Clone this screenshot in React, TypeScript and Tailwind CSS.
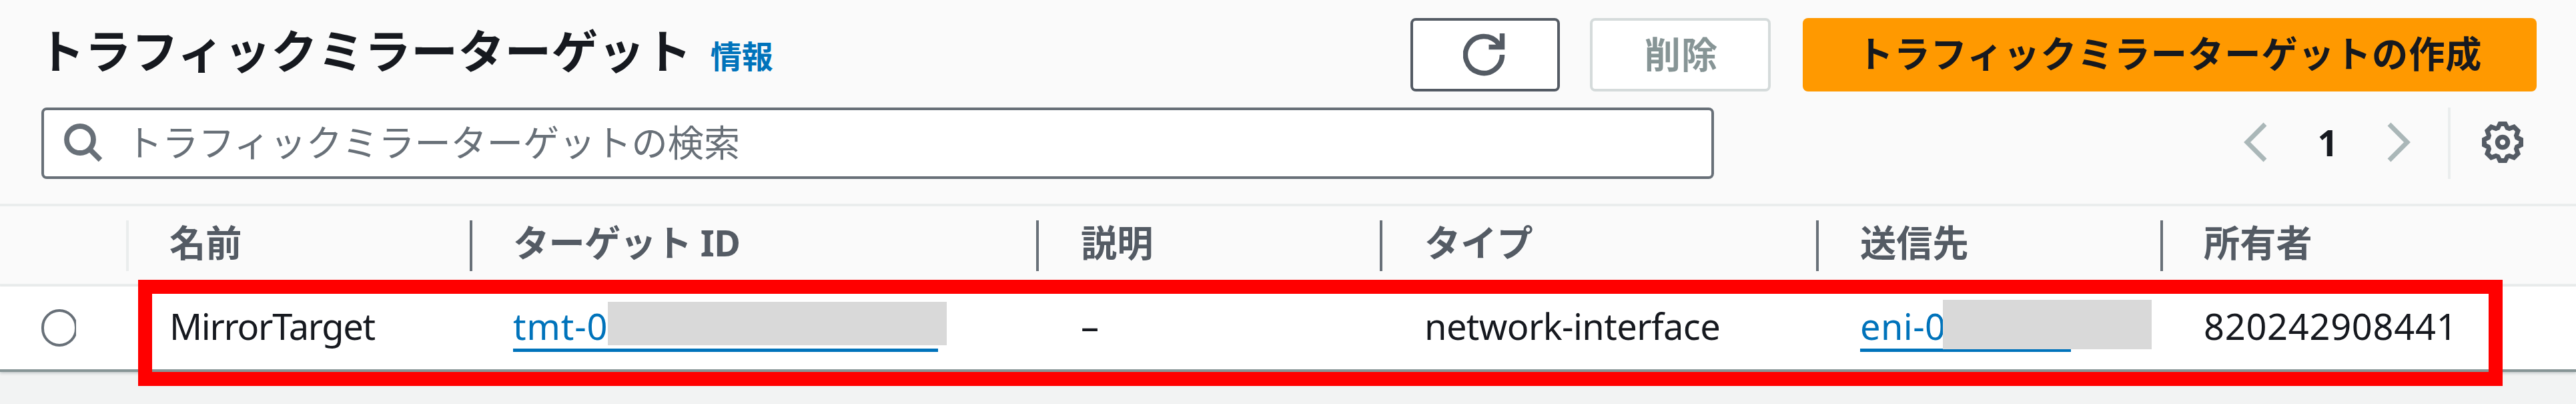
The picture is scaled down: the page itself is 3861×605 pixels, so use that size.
import React from "react";

type Column = { label: string; value: string; width: string; tracking: string; last?: boolean };

const columns: Column[] = [
  { label: "名前", value: "MirrorTarget", width: "w-[515px] pl-[61px]", tracking: "tracking-[-1.3px]" },
  { label: "ターゲット ID", value: "tmt-0", width: "w-[849px] pl-[61px]", tracking: "tracking-[0.8px]" },
  { label: "説明", value: "–", width: "w-[515px] pl-[63px]", tracking: "tracking-normal" },
  { label: "タイプ", value: "network-interface", width: "w-[654px] pl-[63px]", tracking: "tracking-[-0.6px]" },
  { label: "送信先", value: "eni-0", width: "w-[516px] pl-[62px]", tracking: "tracking-[0.4px]" },
  { label: "所有者", value: "820242908441", width: "w-[619px] pl-[61px]", tracking: "tracking-[0.7px]", last: true },
];

function Cell({ value }: { value: string }) {
  if (value === "tmt-0" || value === "eni-0") {
    const target = value === "tmt-0";
    return (
      <a className={`relative block h-[74px] border-b-[5px] border-[#0073bb] text-[#0073bb] ${target ? "w-[637px]" : "w-[316px]"}`}>
        {value}
        <span
          className={`absolute bg-[#d9d9d9] ${
            target ? "left-[142px] top-[-1px] h-[65px] w-[508px]" : "left-[124px] top-[-4px] h-[74px] w-[313px]"
          }`}
        />
      </a>
    );
  }
  return <span className="block h-[74px]">{value}</span>;
}

export default function App() {
  return (
    <div className="relative flex h-[605px] w-[3861px] flex-col overflow-hidden bg-[#f2f3f3] font-['Noto_Sans','Noto_Sans_CJK_JP',sans-serif] text-[54.2px] leading-[70px] whitespace-nowrap text-[#16191f]">
      <header className="flex h-[305px] flex-col bg-[#fafafa] pr-[59px] pl-[62px] pt-[27px]">
        <div className="flex h-[110px] items-center">
          <h1 className="ml-[-5px] pb-[11px] text-[69.7px] font-bold leading-[99px] tracking-[0.4px]">トラフィックミラーターゲット</h1>
          <a className="ml-[28px] pt-[4px] text-[47px] font-bold text-[#0073bb]">情報</a>
          <div className="ml-auto flex font-bold tracking-[1px]">
            <button className="mr-[45px] flex h-[110px] w-[224px] items-center justify-center rounded-[8px] border-4 border-[#545b64] bg-white pr-[2px]">
              <svg className="h-[64px] w-[64px]" viewBox="0 0 64 64" fill="none" stroke="#545b64" strokeWidth="7.5">
                <path d="M58.500 32a27.500 27.500 0 1 1-5.500-16.500L56 20" />
                <path d="M58.500 0v20.500H38.500" />
              </svg>
            </button>
            <button className="mr-[48px] h-[110px] w-[271px] rounded-[8px] border-4 border-[#d5dbdb] bg-white pb-[3px] pl-[3px] text-[#879596]">削除</button>
            <button className="h-[110px] w-[1100px] rounded-[8px] bg-[#ff9900] pb-[5px]">トラフィックミラーターゲットの作成</button>
          </div>
        </div>
        <div className="mt-[24px] flex h-[107px] items-center">
          <div className="flex h-[107px] w-[2507px] items-center rounded-[8px] border-4 border-[#687078] bg-white pl-[30px] text-[#687078]">
            <svg className="mr-[35px] mb-[2px] h-[58px] w-[58px]" viewBox="0 0 58 58" fill="none" stroke="#687078" strokeWidth="7.8">
              <circle cx="24" cy="24" r="20" />
              <path d="M38 38l16.500 16.500" />
            </svg>
            <span className="pb-[4px]">トラフィックミラーターゲットの検索</span>
          </div>
          <div className="ml-auto flex h-[107px] items-center">
            <svg className="mb-[3px] h-[60px] w-[35px]" viewBox="0 0 35 60" fill="none" stroke="#aab7b8" strokeWidth="7">
              <path d="M32 3L5 30l27 27" />
            </svg>
            <span className="w-[180px] pb-[4px] pl-[2px] text-center font-bold">1</span>
            <svg className="mb-[3px] h-[60px] w-[35px]" viewBox="0 0 35 60" fill="none" stroke="#aab7b8" strokeWidth="7">
              <path d="M3 3l27 27L3 57" />
            </svg>
            <div className="ml-[56px] h-[107px] w-[4px] bg-[#eaeded]" />
            <svg className="mr-[20px] mb-[3px] ml-[47px] h-[62px] w-[62px]" viewBox="-31 -31 62 62" fill="none" stroke="#545b64" strokeWidth="7">
              <path d="M-4-27.500H4L7-21.500L10-20.500L17-23L23-17L20.500-10L21.500-7L27.500-4V4L21.500 7L20.500 10L23 17L17 23L10 20.500L7 21.500L4 27.500H-4L-7 21.500L-10 20.500L-17 23L-23 17L-20.500 10L-21.500 7L-27.500 4V-4L-21.500-7L-20.500-10L-23-17L-17-23L-10-20.500L-7-21.500Z" />
              <circle r="7.700" />
            </svg>
          </div>
        </div>
      </header>
      <div className="flex h-[124px] border-y-4 border-[#eaeded] bg-[#fafafa] pt-[21px] font-bold text-[#545b64]">
        <div className="h-[76px] w-[193px] border-r-4 border-[#eaeded]" />
        {columns.map((c) => (
          <div
            key={c.label}
            className={`h-[76px] leading-[66px] ${c.width} ${c.last ? "" : "border-r-4 border-[#687078]"} ${
              c.label.endsWith("ID") ? "tracking-[-0.7px]" : ""
            }`}
          >
            {c.label}
          </div>
        ))}
      </div>
      <div className="flex h-[128px] border-b-4 border-[#879596] bg-white pt-[24px] shadow-[0_2px_4px_rgba(0,28,36,0.2)]">
        <div className="w-[193px] pt-[10px] pl-[62px]">
          <div className="w-[52px] overflow-hidden">
            <div className="h-[56px] w-[54px] rounded-full border-4 border-[#687078]" />
          </div>
        </div>
        {columns.map((c) => (
          <div key={c.label} className={`${c.width} ${c.tracking}`}>
            <Cell value={c.value} />
          </div>
        ))}
      </div>
      <div className="absolute left-[207px] top-[419px] h-[159px] w-[3544px] border-[21px] border-[#ff0000]" />
    </div>
  );
}
